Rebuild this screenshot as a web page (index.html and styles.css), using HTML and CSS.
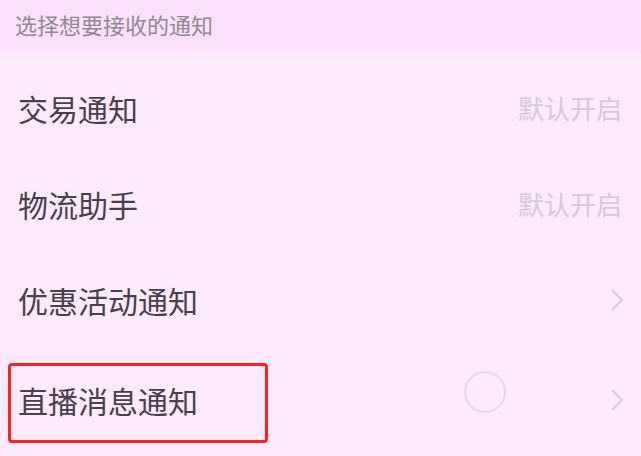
FILE: index.html
```html
<!DOCTYPE html>
<html lang="zh-CN">
<head>
<meta charset="utf-8">
<link rel="stylesheet" href="styles.css">
</head>
<body>
<div class="page">
  <div class="header">选择想要接收的通知</div>
  <div class="list">
    <div class="row">
      <span class="label">交易通知</span>
      <span class="value">默认开启</span>
    </div>
    <div class="row">
      <span class="label">物流助手</span>
      <span class="value">默认开启</span>
    </div>
    <div class="row">
      <span class="label">优惠活动通知</span>
      <svg class="chev" width="14" height="24" viewBox="0 0 14 24"><polyline points="2,2 12,12 2,22" fill="none" stroke="#dccadc" stroke-width="2"/></svg>
    </div>
    <div class="row row-last">
      <span class="label">直播消息通知</span>
      <span class="spinner"></span>
      <svg class="chev" width="14" height="24" viewBox="0 0 14 24"><polyline points="2,2 12,12 2,22" fill="none" stroke="#dccadc" stroke-width="2"/></svg>
      <span class="highlight"></span>
    </div>
  </div>
</div>
</body>
</html>
```
FILE: styles.css
```css
* { box-sizing: border-box; }
html, body {
  margin: 0;
  padding: 0;
  background: #fdeafd;
  font-family: "Noto Sans CJK SC", "Noto Sans", sans-serif;
}
.page {
  width: 641px;
  height: 456px;
  overflow: hidden;
  background: #fdeafd;
}
.header {
  height: 60px;
  padding: 13px 0 0 15px;
  font-size: 22px;
  line-height: 22px;
  color: #938893;
  background: linear-gradient(#fbe1fb 0, #fbe1fb 44px, #fdeafd 60px);
}
.list { display: flex; flex-direction: column; }
.row {
  position: relative;
  height: 96px;
  display: flex;
  align-items: center;
  padding: 0 19px 0 18px;
}
.row-last { padding-top: 8px; }
.label {
  flex: 1;
  font-size: 30px;
  line-height: 30px;
  color: #48414a;
}
.value {
  font-size: 26px;
  line-height: 26px;
  color: #d9c9d9;
}
.chev { display: block; margin-right: -2px; }
.spinner {
  width: 42px;
  height: 42px;
  border: 2px solid #ecd5ec;
  border-radius: 50%;
  margin: 0 104px 16px 0;
}
.highlight {
  position: absolute;
  left: 8px;
  top: 15px;
  width: 260px;
  height: 80px;
  border: 3px solid #f82222;
  border-radius: 4px;
}
```
